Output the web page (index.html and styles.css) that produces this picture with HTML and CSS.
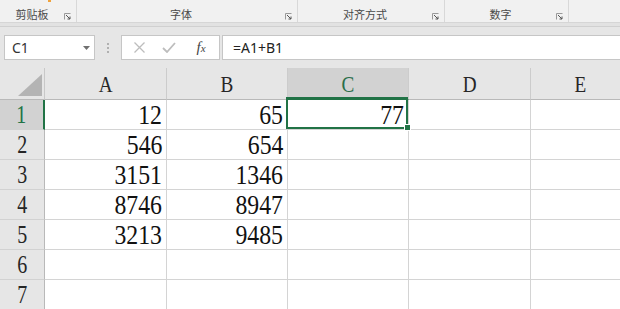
FILE: index.html
```html
<!DOCTYPE html>
<html lang="zh-CN">

<head>
    <meta charset="UTF-8">
    <meta name="viewport" content="width=device-width, initial-scale=1.0">
    <title>Book1 - Excel</title>
    <link rel="stylesheet" href="styles.css">
</head>

<body>
    <div class="ribbon">
        <span class="ribbon-mark"></span>
        <div class="group g1">
            <span class="group-label">剪贴板</span>
            <svg class="launcher" width="7" height="7" viewBox="0 0 7 7"><path d="M0.5 6.5V0.5H6.5" fill="none" stroke="#999" /><path d="M2 2L6 6M6 3.5V6H3.5" fill="none" stroke="#555" /></svg>
        </div>
        <div class="group g2">
            <span class="group-label">字体</span>
            <svg class="launcher" width="7" height="7" viewBox="0 0 7 7"><path d="M0.5 6.5V0.5H6.5" fill="none" stroke="#999" /><path d="M2 2L6 6M6 3.5V6H3.5" fill="none" stroke="#555" /></svg>
        </div>
        <div class="group g3">
            <span class="group-label">对齐方式</span>
            <svg class="launcher" width="7" height="7" viewBox="0 0 7 7"><path d="M0.5 6.5V0.5H6.5" fill="none" stroke="#999" /><path d="M2 2L6 6M6 3.5V6H3.5" fill="none" stroke="#555" /></svg>
        </div>
        <div class="group g4">
            <span class="group-label">数字</span>
            <svg class="launcher" width="7" height="7" viewBox="0 0 7 7"><path d="M0.5 6.5V0.5H6.5" fill="none" stroke="#999" /><path d="M2 2L6 6M6 3.5V6H3.5" fill="none" stroke="#555" /></svg>
        </div>
    </div>
    <div class="ribbon-gap"></div>

    <div class="formula-bar">
        <div class="name-box">
            <span>C1</span>
            <svg width="7" height="4" viewBox="0 0 7 4"><path d="M0 0H7L3.5 4Z" fill="#707070" /></svg>
        </div>
        <div class="grip">
            <svg width="2" height="10" viewBox="0 0 2 10"><rect y="0" width="2" height="2" fill="#b0b0b0" /><rect y="4" width="2" height="2" fill="#b0b0b0" /><rect y="8" width="2" height="2" fill="#b0b0b0" /></svg>
        </div>
        <div class="fx-box">
            <span class="fx-slot"><svg width="11" height="11" viewBox="0 0 11 11"><path d="M0.5 0.5L10.5 10.5M10.5 0.5L0.5 10.5" stroke="#bdbdbd" stroke-width="1.3" /></svg></span>
            <span class="fx-slot"><svg width="14" height="11" viewBox="0 0 14 11"><path d="M1 6L5 10L13 1" fill="none" stroke="#bdbdbd" stroke-width="1.8" /></svg></span>
            <span class="fx-slot fx">f<sub>x</sub></span>
        </div>
        <div class="formula-input">=A1+B1</div>
    </div>

    <div class="sheet">
        <div class="corner">
            <svg width="24" height="22" viewBox="0 0 24 22"><path d="M24 0V22H0Z" fill="#b4b4b4" /></svg>
        </div>
        <div class="col-head"><span>A</span></div>
        <div class="col-head"><span>B</span></div>
        <div class="col-head active"><span>C</span></div>
        <div class="col-head"><span>D</span></div>
        <div class="col-head"><span>E</span></div>

        <div class="row-head active"><span>1</span></div>
        <div class="cell"><span>12</span></div>
        <div class="cell"><span>65</span></div>
        <div class="cell active"><span>77</span></div>
        <div class="cell"></div>
        <div class="cell"></div>

        <div class="row-head"><span>2</span></div>
        <div class="cell"><span>546</span></div>
        <div class="cell"><span>654</span></div>
        <div class="cell"></div>
        <div class="cell"></div>
        <div class="cell"></div>

        <div class="row-head"><span>3</span></div>
        <div class="cell"><span>3151</span></div>
        <div class="cell"><span>1346</span></div>
        <div class="cell"></div>
        <div class="cell"></div>
        <div class="cell"></div>

        <div class="row-head"><span>4</span></div>
        <div class="cell"><span>8746</span></div>
        <div class="cell"><span>8947</span></div>
        <div class="cell"></div>
        <div class="cell"></div>
        <div class="cell"></div>

        <div class="row-head"><span>5</span></div>
        <div class="cell"><span>3213</span></div>
        <div class="cell"><span>9485</span></div>
        <div class="cell"></div>
        <div class="cell"></div>
        <div class="cell"></div>

        <div class="row-head"><span>6</span></div>
        <div class="cell"></div>
        <div class="cell"></div>
        <div class="cell"></div>
        <div class="cell"></div>
        <div class="cell"></div>

        <div class="row-head"><span>7</span></div>
        <div class="cell"></div>
        <div class="cell"></div>
        <div class="cell"></div>
        <div class="cell"></div>
        <div class="cell"></div>
    </div>
</body>

</html>
```

FILE: styles.css
```css
* {
    margin: 0;
    padding: 0;
    box-sizing: border-box;
}

body {
    width: 620px;
    height: 309px;
    overflow: hidden;
    background-color: #ffffff;
    font-family: "Noto Sans", "Noto Sans CJK SC", sans-serif;
}

/* ribbon */
.ribbon {
    position: relative;
    display: flex;
    height: 23px;
    background-color: #f1f1f1;
    border-bottom: 1px solid #d6d6d6;
}

.ribbon-mark {
    position: absolute;
    left: 48px;
    top: 0;
    width: 3px;
    height: 2px;
    background-color: #f0a23c;
}

.group {
    display: flex;
    align-items: flex-end;
    border-right: 1px solid #d8d8d8;
}

.g1 {
    width: 77px;
}

.g2 {
    width: 221px;
}

.g3 {
    width: 147px;
}

.g4 {
    width: 124px;
}

.group-label {
    flex: 1;
    text-align: center;
    font-family: "Noto Sans CJK SC", sans-serif;
    font-size: 11px;
    line-height: 15px;
    color: #4a4a4a;
}

.launcher {
    margin: 0 5px 2px 0;
}

.ribbon-gap {
    height: 4px;
    background-color: #e2e2e2;
    border-bottom: 1px solid #d0d0d0;
}

/* formula bar */
.formula-bar {
    display: flex;
    height: 41px;
    padding-top: 8px;
    background-color: #e6e6e6;
}

.name-box {
    display: flex;
    align-items: center;
    justify-content: space-between;
    width: 91px;
    height: 25px;
    margin-left: 4px;
    padding: 0 4px 0 7px;
    background-color: #ffffff;
    border: 1px solid #c6c6c6;
    font-size: 14px;
    color: #333333;
}

.grip {
    display: flex;
    justify-content: center;
    width: 26px;
    padding-top: 8px;
}

.grip svg {
    display: block;
}

.fx-box {
    display: flex;
    align-items: center;
    width: 99px;
    height: 25px;
    padding-left: 2px;
    background-color: #ffffff;
    border: 1px solid #c6c6c6;
}

.fx-slot {
    display: flex;
    justify-content: center;
    align-items: center;
    width: 30px;
}

.fx-slot svg {
    display: block;
}

.fx {
    width: 34px;
    font-family: "Liberation Serif", serif;
    font-style: italic;
    font-size: 15px;
    color: #444444;
}

.fx sub {
    font-size: 11px;
    vertical-align: -1px;
}

.formula-input {
    flex: 1;
    height: 25px;
    margin-left: 2px;
    padding-left: 10px;
    background-color: #ffffff;
    border: 1px solid #c6c6c6;
    border-right: none;
    font-size: 14px;
    line-height: 23px;
    color: #222222;
}

/* sheet grid */
.sheet {
    display: grid;
    grid-template-columns: 45px 122px 121px 121px 122px 100px;
    grid-template-rows: 32px repeat(7, 30px);
    font-family: "Liberation Serif", serif;
}

.corner {
    display: flex;
    align-items: flex-end;
    padding: 0 0 3px 18px;
    background-color: #e6e6e6;
    border-right: 1px solid #c8c8c8;
    border-bottom: 1px solid #b9b9b9;
}

.corner svg {
    display: block;
}

.col-head {
    text-align: center;
    background-color: #e6e6e6;
    border-right: 1px solid #cccccc;
    border-bottom: 1px solid #b9b9b9;
    font-size: 24px;
    line-height: 32px;
    color: #262626;
}

.col-head span,
.row-head span {
    display: inline-block;
    transform: scaleX(0.8);
}

.col-head.active {
    background-color: #d2d2d2;
    border-bottom-color: #217346;
    color: #2b6e4a;
}

.row-head {
    text-align: center;
    background-color: #e6e6e6;
    border-right: 1px solid #b9b9b9;
    border-bottom: 1px solid #d2d2d2;
    font-size: 25px;
    line-height: 30px;
    color: #262626;
}

.row-head.active {
    background-color: #d2d2d2;
    border-right: 2px solid #217346;
    color: #217346;
}

.cell {
    padding: 1px 4px 0 0;
    text-align: right;
    border-right: 1px solid #d4d4d4;
    border-bottom: 1px solid #d4d4d4;
    font-size: 27px;
    line-height: 28px;
    color: #111111;
}

.cell span {
    display: inline-block;
    transform: scaleX(0.88);
    transform-origin: right center;
}

.cell.active {
    position: relative;
}

.cell.active::after {
    content: "";
    position: absolute;
    top: -3px;
    left: -2px;
    right: 0;
    bottom: 0;
    border: 2px solid #217346;
}

.cell.active::before {
    content: "";
    position: absolute;
    right: -2px;
    bottom: -1px;
    width: 5px;
    height: 5px;
    background-color: #217346;
    box-shadow: 0 0 0 1px #ffffff;
    z-index: 1;
}
```
